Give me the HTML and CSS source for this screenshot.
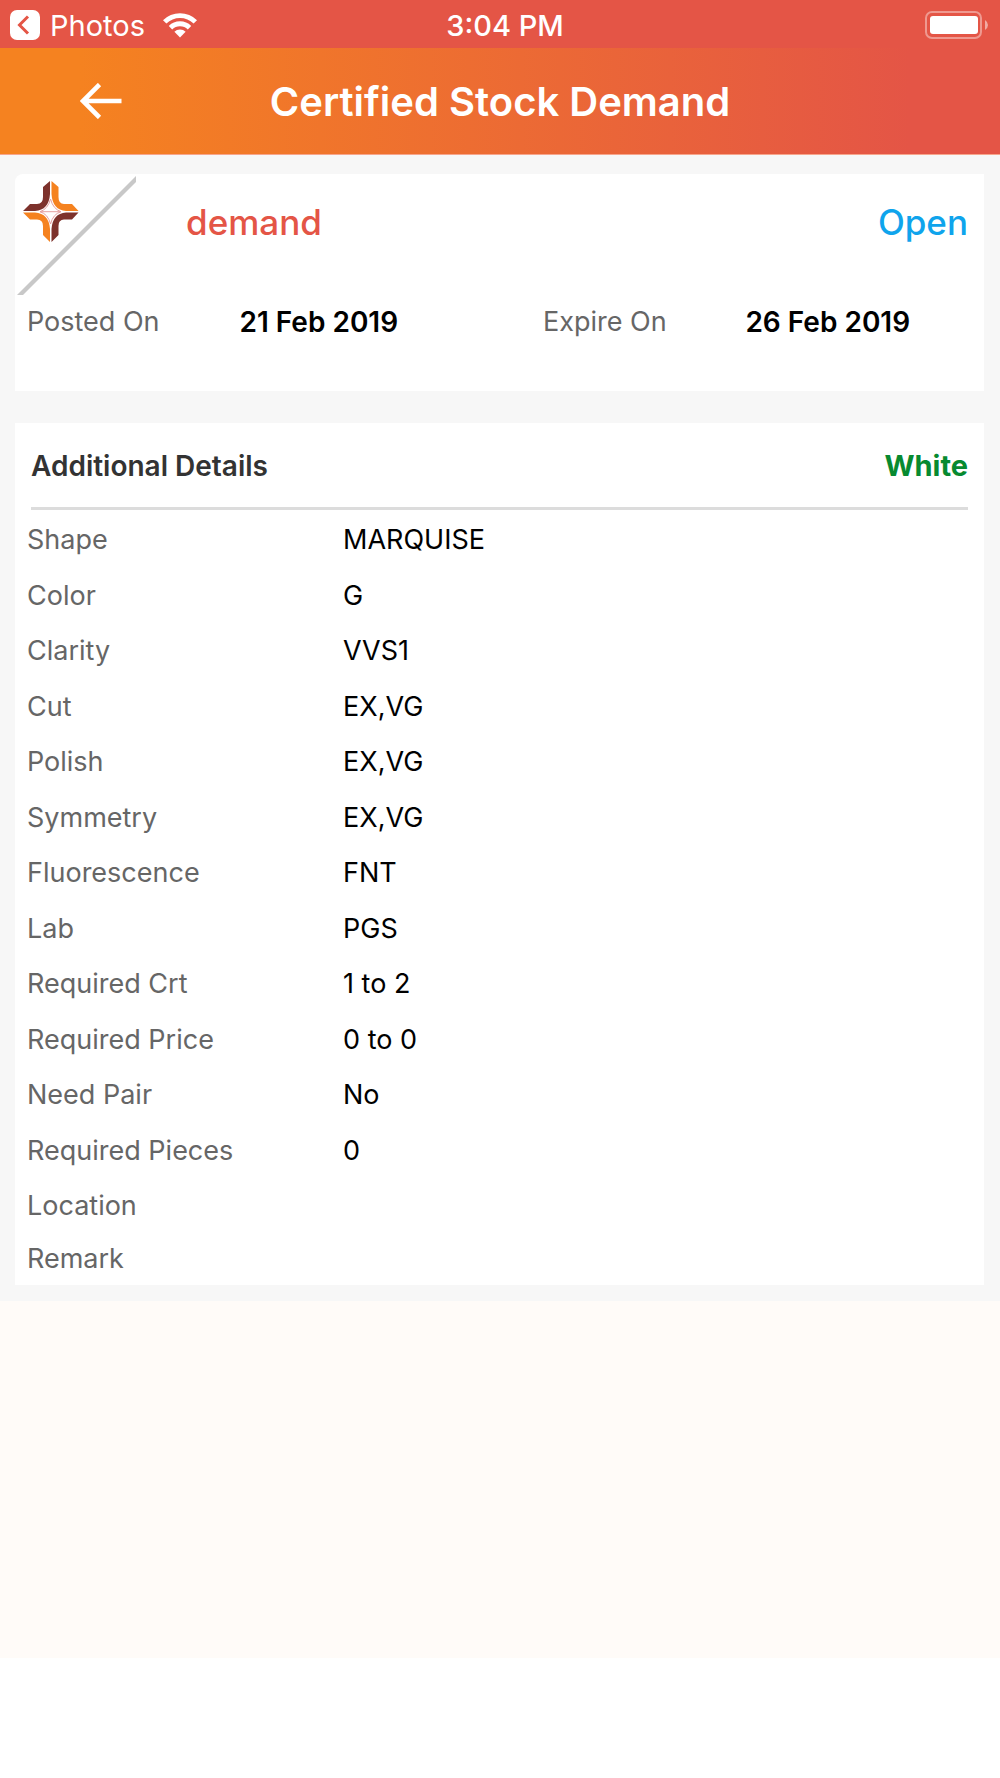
FILE: index.html
```html
<!DOCTYPE html>
<html lang="en">
  <head>
    <meta charset="UTF-8" />
    <meta name="viewport" content="width=device-width, initial-scale=1.0" />
    <title>Certified Stock Demand</title>
    <link rel="stylesheet" href="styles.css" />
  </head>
  <body>
    <div class="status-bar">
      <a href="#" class="status-back">
        <svg width="30" height="30" viewBox="0 0 30 30" aria-hidden="true">
          <rect width="30" height="30" rx="7" fill="#fff" />
          <path d="M18 6.5 L9.5 15 L18 23.5" fill="none" stroke="#e45546" stroke-width="3" />
        </svg>
        <span>Photos</span>
        <svg class="wifi" width="34" height="25" viewBox="0 0 34 25" aria-hidden="true">
          <path d="M0 7.2 A24 24 0 0 1 34 7.2 L30.6 10.6 A19.2 19.2 0 0 0 3.4 10.6 Z" fill="#fff" />
          <path d="M5.8 13 A15.8 15.8 0 0 1 28.2 13 L24.8 16.4 A11 11 0 0 0 9.2 16.4 Z" fill="#fff" />
          <path d="M11.4 18.7 A8 8 0 0 1 22.6 18.7 L17 24.6 Z" fill="#fff" />
        </svg>
      </a>
      <span class="time">3:04 PM</span>
      <svg class="battery" width="63" height="28" viewBox="0 0 63 28" aria-hidden="true">
        <rect x="1" y="1" width="55" height="26" rx="6" fill="none" stroke="#fff" stroke-opacity="0.4" stroke-width="2" />
        <rect x="5" y="5" width="48" height="18" rx="3" fill="#fff" />
        <path d="M60 9 Q63 11 63 14 Q63 17 60 19 Z" fill="#fff" fill-opacity="0.5" />
      </svg>
    </div>

    <header class="header">
      <button class="back" aria-label="Back">
        <svg width="42" height="36" viewBox="0 0 42 36" aria-hidden="true">
          <path d="M19.5 1.5 L3 18 L19.5 34.5 M3 18 H41.5" fill="none" stroke="#fff" stroke-width="4.6" />
        </svg>
      </button>
      <h1>Certified Stock Demand</h1>
    </header>

    <main class="content">
      <section class="card summary">
        <div class="summary-top">
          <svg class="logo" width="119" height="119" viewBox="0 0 119 119" aria-hidden="true">
            <path d="M0 119 L119 0 V6 L6 119 Z" fill="#c8c8c8" />
            <path d="M33 5 V18 Q32 34 18 35 H6 L13 28 H20 Q26 28 26 21 V11 Z" fill="#7d322c" />
            <path d="M34.5 5 V18 Q35.5 34 49 35 H61.5 L55 28 H47 Q41.5 28 41.5 21 V11 Z" fill="#f5821f" />
            <path d="M33 66 V53 Q32 37.5 18 36.5 H6 L13 43.5 H20 Q26 43.5 26 50 V59 Z" fill="#f5821f" />
            <path d="M34.5 66 V53 Q35.5 37.5 49 36.5 H61.5 L55 43.5 H47 Q41.5 43.5 41.5 50 V59 Z" fill="#7d322c" />
            <path d="M33.5 23 Q36 33 44 35.7 Q36 38 33.5 48 Q31 38 23 35.7 Q31 33 33.5 23 Z" fill="#fff" stroke="#e4a0a0" stroke-width="1" />
            <path d="M23 35.7 H44" stroke="#e4a0a0" stroke-width="1" />
          </svg>
          <h2 class="name">demand</h2>
          <span class="state">Open</span>
        </div>
        <dl class="dates">
          <dt>Posted On</dt>
          <dd>21 Feb 2019</dd>
          <dt>Expire On</dt>
          <dd>26 Feb 2019</dd>
        </dl>
      </section>

      <section class="card details">
        <div class="details-head">
          <h2>Additional Details</h2>
          <span class="kind">White</span>
        </div>
        <table class="list">
          <tr><th scope="row">Shape</th><td>MARQUISE</td></tr>
          <tr><th scope="row">Color</th><td>G</td></tr>
          <tr><th scope="row">Clarity</th><td>VVS1</td></tr>
          <tr><th scope="row">Cut</th><td>EX,VG</td></tr>
          <tr><th scope="row">Polish</th><td>EX,VG</td></tr>
          <tr><th scope="row">Symmetry</th><td>EX,VG</td></tr>
          <tr><th scope="row">Fluorescence</th><td>FNT</td></tr>
          <tr><th scope="row">Lab</th><td>PGS</td></tr>
          <tr><th scope="row">Required Crt</th><td>1 to 2</td></tr>
          <tr><th scope="row">Required Price</th><td>0 to 0</td></tr>
          <tr><th scope="row">Need Pair</th><td>No</td></tr>
          <tr><th scope="row">Required Pieces</th><td>0</td></tr>
          <tr><th scope="row">Location</th><td></td></tr>
          <tr><th scope="row">Remark</th><td></td></tr>
        </table>
      </section>
    </main>
    <div class="blank"></div>
    <footer class="bottom"></footer>
  </body>
</html>
```

FILE: styles.css
```css
* {
  margin: 0;
  padding: 0;
  box-sizing: border-box;
}
body {
  min-height: 100vh;
  display: flex;
  flex-direction: column;
  font-family: Inter, "Liberation Sans", sans-serif;
  font-size: 28px;
  color: #000;
  background-color: #fff;
}
svg {
  display: block;
}

/* status bar */
.status-bar {
  height: 48px;
  padding: 2px 12px 0 10px;
  display: grid;
  grid-template-columns: 1fr auto 1fr;
  align-items: center;
  background-color: #e45546;
  color: #fff;
  font-size: 29px;
}
.status-back {
  display: flex;
  align-items: center;
  gap: 10px;
  color: #fff;
  text-decoration: none;
}
.wifi {
  margin-left: 8px;
}
.time {
  margin-left: 12px;
  font-weight: 500;
}
.battery {
  justify-self: end;
}

/* title bar */
.header {
  height: 107px;
  padding: 0 80px;
  display: grid;
  grid-template-columns: 1fr auto 1fr;
  align-items: center;
  background-image: linear-gradient(to right, #f58220 8%, #e45546 91%);
  border-bottom: 1px solid #f7a58c;
  color: #fff;
}
.back {
  justify-self: start;
  border: none;
  background-color: transparent;
  cursor: pointer;
}
.header h1 {
  font-size: 40px;
  font-weight: 600;
}

.content {
  padding: 19px 16px 16px 15px;
  display: grid;
  gap: 32px;
  background-color: #f7f7f7;
}
.card {
  background-color: #fff;
}

/* summary */
.summary {
  padding: 2px 16px 42px 2px;
  border-top-left-radius: 8px;
}
.summary-top {
  display: flex;
}
.name,
.state {
  font-size: 35px;
  font-weight: 500;
  line-height: 92px;
}
.name {
  margin-left: 50px;
  color: #e45546;
}
.state {
  margin-left: auto;
  color: #0fa4ec;
}
.dates {
  padding-left: 10px;
  display: grid;
  grid-template-columns: 21fr 30fr 20fr 22fr;
  line-height: 54px;
}
.dates dt {
  font-size: 27px;
  color: #666;
}
.dates dd {
  font-weight: 600;
}

/* details */
.details-head {
  padding-top: 2px;
  margin: 0 16px;
  display: flex;
  justify-content: space-between;
  line-height: 82px;
  border-bottom: 3px solid #dcdcdc;
}
.details-head h2 {
  font-size: 28px;
  font-weight: 600;
  color: #333;
}
.kind {
  font-size: 29px;
  font-weight: 700;
  color: #078a30;
}
.list {
  width: 100%;
  border-collapse: collapse;
  table-layout: fixed;
  font-size: 27px;
}
.list tr {
  height: 55px;
}
.list tr:nth-child(even) {
  height: 56px;
}
.list tr:last-child {
  height: 54px;
}
.list th,
.list td {
  padding-top: 4px;
}
.list th {
  width: 328px;
  padding-left: 12px;
  text-align: left;
  font-weight: 400;
  color: #666;
}
.list tr:last-child th {
  padding-top: 0;
}

.blank {
  flex: 1;
  background-color: #fffbf8;
}
.bottom {
  height: 120px;
}
```
